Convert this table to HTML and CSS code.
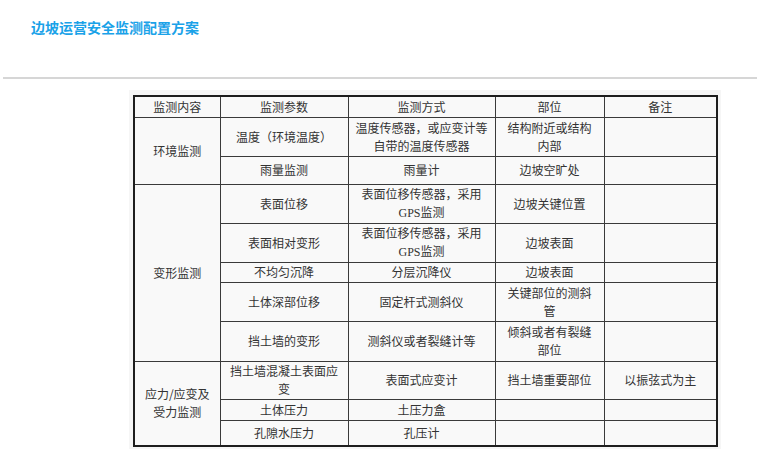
FILE: index.html
```html
<!DOCTYPE html>
<html lang="zh-CN">
<head>
<meta charset="utf-8">
<title>边坡运营安全监测配置方案</title>
<link rel="stylesheet" href="styles.css">
</head>
<body>
<div class="page">
  <h1 class="title">边坡运营安全监测配置方案</h1>
  <div class="rule"></div>
  <div class="figure">
    <table class="grid">
      <colgroup>
        <col class="c1"><col class="c2"><col class="c3"><col class="c4"><col class="c5">
      </colgroup>
      <tr class="h21">
        <td>监测内容</td><td>监测参数</td><td>监测方式</td><td>部位</td><td>备注</td>
      </tr>
      <tr class="h39">
        <td rowspan="2">环境监测</td><td>温度（环境温度）</td><td>温度传感器，或应变计等自带的温度传感器</td><td>结构附近或结构内部</td><td></td>
      </tr>
      <tr class="h28">
        <td>雨量监测</td><td>雨量计</td><td>边坡空旷处</td><td></td>
      </tr>
      <tr class="h39">
        <td rowspan="5">变形监测</td><td>表面位移</td><td>表面位移传感器，采用<span class="latin">GPS</span>监测</td><td>边坡关键位置</td><td></td>
      </tr>
      <tr class="h39">
        <td>表面相对变形</td><td>表面位移传感器，采用<span class="latin">GPS</span>监测</td><td>边坡表面</td><td></td>
      </tr>
      <tr class="h20">
        <td>不均匀沉降</td><td>分层沉降仪</td><td>边坡表面</td><td></td>
      </tr>
      <tr class="h39">
        <td>土体深部位移</td><td>固定杆式测斜仪</td><td>关键部位的测斜管</td><td></td>
      </tr>
      <tr class="h40">
        <td>挡土墙的变形</td><td>测斜仪或者裂缝计等</td><td>倾斜或者有裂缝部位</td><td></td>
      </tr>
      <tr class="h38">
        <td rowspan="3">应力/应变及受力监测</td><td>挡土墙混凝土表面应变</td><td>表面式应变计</td><td>挡土墙重要部位</td><td>以振弦式为主</td>
      </tr>
      <tr class="h21">
        <td>土体压力</td><td>土压力盒</td><td></td><td></td>
      </tr>
      <tr class="h26">
        <td>孔隙水压力</td><td>孔压计</td><td></td><td></td>
      </tr>
    </table>
  </div>
</div>
</body>
</html>
```

FILE: styles.css
```css
html, body {
  margin: 0;
  padding: 0;
  background: #ffffff;
}

.page {
  font-family: "Noto Sans CJK SC", "Noto Sans", sans-serif;
  color: #333333;
}

.title {
  margin: 0;
  padding: 17px 0 0 31px;
  height: 43px;
  box-sizing: border-box;
  font-size: 14px;
  line-height: 20px;
  font-weight: bold;
  color: #1aa2e8;
}

.rule {
  margin: 34px 2px 0 3px;
  height: 0;
  border-top: 2px solid #d6d6d6;
}

.figure {
  margin: 11px 0 0 129px;
  width: 592px;
  height: 359px;
  box-sizing: border-box;
  padding: 5px 0 0 4px;
  background: #f6f6f6;
}

.grid {
  border-collapse: collapse;
  table-layout: fixed;
  width: 583px;
  border: 2px solid #1e1e1e;
  background: #f9f9f9;
  font-size: 12px;
  line-height: 18px;
  color: #333333;
}

.grid td {
  border: 1px solid #3a3a3a;
  padding: 0 7px;
  text-align: center;
  vertical-align: middle;
}

.latin {
  font-family: "Liberation Serif", "DejaVu Serif", serif;
}

.c1 { width: 86px; }
.c2 { width: 128px; }
.c3 { width: 147px; }
.c4 { width: 109px; }
.c5 { width: 113px; }

.h20 { height: 20px; }
.h21 { height: 21px; }
.h26 { height: 26px; }
.h28 { height: 28px; }
.h38 { height: 38px; }
.h39 { height: 39px; }
.h40 { height: 40px; }
```
